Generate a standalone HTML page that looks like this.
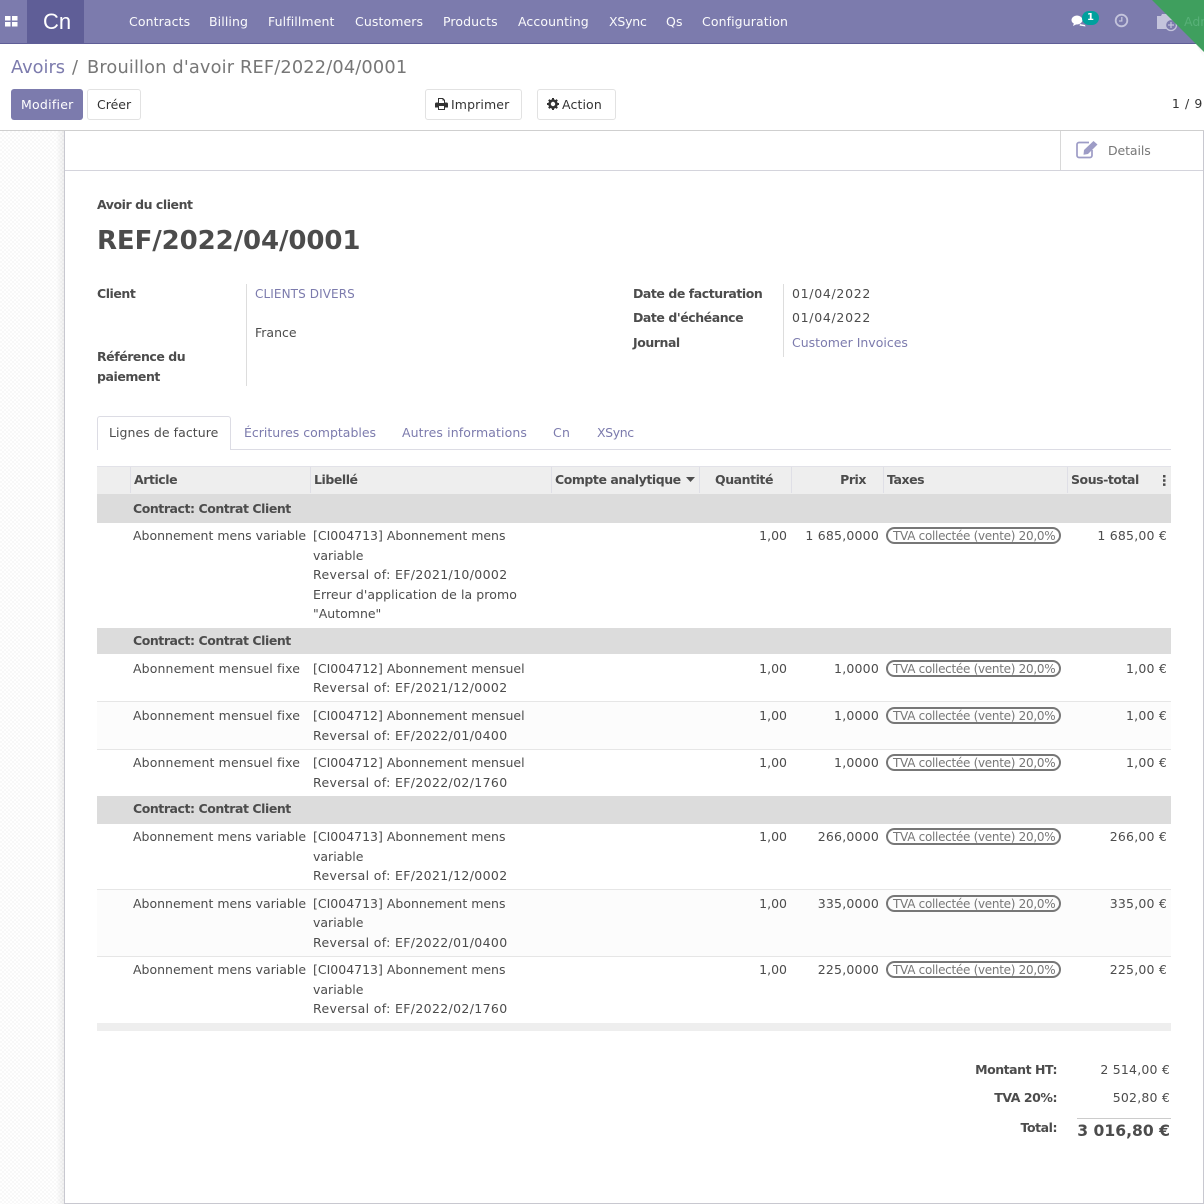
<!DOCTYPE html>
<html lang="fr"><head><meta charset="utf-8"><title>Avoir</title>
<style>
html,body{margin:0;padding:0;background:#fff}
#p{position:relative;width:1204px;height:1204px;overflow:hidden;background:#fff;font-family:"DejaVu Sans","Liberation Sans",sans-serif;font-size:12.5px;color:#4c4c4c}
#p div{position:absolute}
.t{position:absolute;white-space:nowrap;line-height:20px;height:20px;margin-top:1px}
.r{transform:translateX(-100%)}
.b{font-weight:bold;letter-spacing:-.45px}
.l{color:#7c7bad}
.n{color:#fff;top:11px;font-size:12.5px;letter-spacing:.1px;opacity:.97}
.btn{border:1px solid #e2e2e2;border-radius:3px;background:#fff;box-sizing:border-box}
.g{left:97px;width:1074px;background:#dcdcdc}
.s{left:97px;width:1074px;height:1px;background:#e6e6e6}
.alt{left:97px;width:1074px;background:#fcfcfc}
.sep{top:467px;width:1px;height:26px;background:#dfdfe6}
.pill{left:886px;width:175px;height:17px;border:2px solid #777;border-radius:9px;box-sizing:border-box}
.tx{left:893px;color:#777;font-size:12px;letter-spacing:-.29px}
.d{letter-spacing:.35px}
.m{letter-spacing:.2px}
.c{letter-spacing:.12px}
.dt{letter-spacing:.7px}
.bc{line-height:22px;height:22px;font-size:17.8px}
</style></head><body><div id="p">

<!-- nav -->
<div style="left:0;top:0;width:1204px;height:44px;background:#7c7bad;border-bottom:1px solid #5f5e97;box-sizing:border-box"></div>
<div style="left:27px;top:0;width:57px;height:43px;background:#5f5e97"></div>
<svg style="position:absolute;left:5px;top:16px" width="13" height="11" viewBox="0 0 13 11"><path fill="#fff" d="M0 0h5.500v4.500H0zM7 0h5.500v4.500H7zM0 6h5.500v4.500H0zM7 6h5.500v4.500H7z"/></svg>
<span class="t" style="left:43px;top:11px;color:#fff;font-size:22px;font-family:'Liberation Sans',sans-serif">Cn</span>
<span class="t n" style="left:129px">Contracts</span>
<span class="t n" style="left:209px">Billing</span>
<span class="t n" style="left:268px">Fulfillment</span>
<span class="t n" style="left:355px">Customers</span>
<span class="t n" style="left:443px">Products</span>
<span class="t n" style="left:518px">Accounting</span>
<span class="t n" style="left:609px;letter-spacing:-.2px">XSync</span>
<span class="t n" style="left:666px">Qs</span>
<span class="t n" style="left:702px">Configuration</span>
<svg style="position:absolute;left:1071px;top:15px" width="16" height="13" viewBox="0 0 16 13"><ellipse cx="6" cy="5" rx="5.500" ry="4.500" fill="#fff"/><path fill="#fff" d="M3 8l-1 3 4-2zM9 9l5 1 .5 1.500-6-1z"/></svg>
<div style="left:1082px;top:11px;width:17px;height:14px;border-radius:7px;background:#00a09d"></div>
<span class="t" style="left:1087px;top:7px;color:#fff;font-size:10px;font-weight:bold">1</span>
<svg style="position:absolute;left:1114px;top:13px" width="15" height="15" viewBox="0 0 15 15"><circle cx="7.500" cy="7.500" r="5.800" fill="none" stroke="#c4c4dc" stroke-width="1.800"/><path d="M7.800 4v4H5" fill="none" stroke="#c4c4dc" stroke-width="1.300"/></svg>
<svg style="position:absolute;left:1156px;top:13px" width="22" height="19" viewBox="0 0 22 19"><path fill="#c4c4dc" d="M1 3h4l1-2h5l1 2h3v13H1z"/><circle cx="15" cy="12" r="5.500" fill="#7c7bad" stroke="#c4c4dc" stroke-width="1.300"/><path d="M15 9v6M12 12h6" stroke="#c4c4dc" stroke-width="1.200"/></svg>
<svg style="position:absolute;left:1100px;top:0" width="104" height="80" viewBox="0 0 104 80"><defs><linearGradient id="sh" x1="0" y1="0" x2="1" y2="1"><stop offset="0" stop-color="#000" stop-opacity=".08"/><stop offset="1" stop-color="#000" stop-opacity="0"/></linearGradient></defs><path d="M104 52L96 44h0l8 14z" fill="url(#sh)"/><path d="M52 0H104V52Z" fill="#3f9f5e"/></svg>
<span class="t" style="left:1184px;top:11px;color:#58b078;font-size:12.500px">Adm</span>

<!-- control panel -->
<span class="t bc" style="left:11px;top:56px;color:#7c7bad">Avoirs</span>
<span class="t bc" style="left:72px;top:56px;color:#777">/</span>
<span class="t bc" style="left:87px;top:56px;color:#777;letter-spacing:.15px">Brouillon d'avoir REF/2022/04/0001</span>
<div style="left:11px;top:89px;width:72px;height:31px;background:#7c7bad;border-radius:3px"></div>
<span class="t" style="left:21px;top:94px;color:#fff;letter-spacing:.25px">Modifier</span>
<div class="btn" style="left:87px;top:89px;width:54px;height:31px"></div>
<span class="t" style="left:97px;top:94px;color:#333">Créer</span>
<div class="btn" style="left:425px;top:89px;width:97px;height:31px"></div>
<svg style="position:absolute;left:435px;top:98px" width="13" height="12" viewBox="0 0 13 12"><path fill="#333" d="M3 0h5l2 2v2.500h1.500A1.500 1.500 0 0 1 13 6v3.500h-3V12H3V9.500H0V6a1.500 1.500 0 0 1 1.500-1.500H3zM4 1v4h5V2.500H7.500V1zM4 8v3h5V8z"/></svg>
<span class="t c" style="left:451px;top:94px;color:#333">Imprimer</span>
<div class="btn" style="left:537px;top:89px;width:79px;height:31px"></div>
<svg style="position:absolute;left:547px;top:98px" width="12" height="12" viewBox="0 0 12 12"><circle cx="6" cy="6" r="3.500" fill="none" stroke="#333" stroke-width="2.600"/><path stroke="#333" stroke-width="2" d="M6 0v2M6 10v2M0 6h2M10 6h2M1.800 1.800l1.400 1.400M8.800 8.800l1.400 1.400M1.800 10.200l1.400-1.400M8.800 3.200l1.400-1.400"/></svg>
<span class="t c" style="left:562px;top:94px;color:#333">Action</span>
<span class="t r" style="left:1203px;top:93px;color:#333;letter-spacing:.6px">1 / 9</span>

<!-- gutter -->
<div style="left:0;top:131px;width:64px;height:1073px;background-color:#fff;background-image:conic-gradient(#f8f8f8 25%,#fff 0 50%,#f8f8f8 0 75%,#fff 0);background-size:4px 4px"></div>
<div style="left:56px;top:131px;width:8px;height:1073px;background:linear-gradient(90deg,rgba(0,0,0,0),rgba(0,0,0,.06))"></div>
<div style="left:0;top:130px;width:1204px;height:1px;background:#cfcfcf"></div>
<div style="left:64px;top:131px;width:1px;height:1073px;background:#c8c8d0"></div>
<div style="left:65px;top:170px;width:1139px;height:1px;background:#d4d4dc"></div>
<div style="left:1060px;top:131px;width:1px;height:39px;background:#d8d8d8"></div>
<div style="left:1203px;top:131px;width:1px;height:1073px;background:#c8c8d0"></div>
<div style="left:65px;top:1203px;width:1139px;height:1px;background:#c8c8d0"></div>
<svg style="position:absolute;left:1076px;top:140px" width="23" height="19" viewBox="0 0 23 19"><path fill="none" stroke="#9d9cc6" stroke-width="1.700" d="M16 10v5.500a2 2 0 0 1-2 2H3a2 2 0 0 1-2-2V4.500a2 2 0 0 1 2-2h10"/><path fill="#9d9cc6" d="M8 10L17.500 1l4 3.500-9.500 9.500-4.500.8z"/></svg>
<span class="t" style="left:1108px;top:140px;color:#777;letter-spacing:-.1px">Details</span>

<!-- header -->
<span class="t b" style="left:97px;top:194px">Avoir du client</span>
<span class="t" style="left:97px;top:224px;height:32px;line-height:32px;font-size:26px;font-weight:bold;letter-spacing:-.1px">REF/2022/04/0001</span>
<span class="t b" style="left:97px;top:283px">Client</span>
<span class="t b" style="left:97px;top:346px">Référence du</span>
<span class="t b" style="left:97px;top:366px">paiement</span>
<div style="left:246px;top:284px;width:1px;height:102px;background:#ddd"></div>
<span class="t l" style="left:255px;top:283px;font-size:12px;letter-spacing:.1px">CLIENTS DIVERS</span>
<span class="t" style="left:255px;top:322px">France</span>
<span class="t b" style="left:633px;top:283px">Date de facturation</span>
<span class="t b" style="left:633px;top:307px">Date d'échéance</span>
<span class="t b" style="left:633px;top:332px">Journal</span>
<div style="left:783px;top:284px;width:1px;height:73px;background:#ddd"></div>
<span class="t dt" style="left:792px;top:283px">01/04/2022</span>
<span class="t dt" style="left:792px;top:307px">01/04/2022</span>
<span class="t l" style="left:792px;top:332px">Customer Invoices</span>

<!-- tabs -->
<div style="left:97px;top:449px;width:1074px;height:1px;background:#dcdce4"></div>
<div style="left:97px;top:416px;width:134px;height:34px;background:#fff;border:1px solid #dcdce4;border-bottom:0;border-radius:3px 3px 0 0;box-sizing:border-box"></div>
<span class="t" style="left:109px;top:422px;letter-spacing:.06px">Lignes de facture</span>
<span class="t l" style="left:244px;top:422px">Écritures comptables</span>
<span class="t l" style="left:402px;top:422px;letter-spacing:.1px">Autres informations</span>
<span class="t l" style="left:553px;top:422px;letter-spacing:.3px">Cn</span>
<span class="t l" style="left:597px;top:422px;letter-spacing:-.4px">XSync</span>

<!-- table head -->
<div style="left:97px;top:466px;width:1074px;height:28px;background:#eee;border-top:1px solid #e2e2e8;box-sizing:border-box"></div>
<div class="sep" style="left:130px"></div><div class="sep" style="left:310px"></div><div class="sep" style="left:551px"></div><div class="sep" style="left:699px"></div><div class="sep" style="left:791px"></div><div class="sep" style="left:883px"></div><div class="sep" style="left:1067px"></div>
<span class="t b" style="left:134px;top:469px">Article</span>
<span class="t b" style="left:314px;top:469px">Libellé</span>
<span class="t b" style="left:555px;top:469px">Compte analytique</span>
<svg style="position:absolute;left:686px;top:477px" width="9" height="5" viewBox="0 0 9 5"><path fill="#4c4c4c" d="M0 0h9L4.500 5z"/></svg>
<span class="t b r" style="left:773px;top:469px">Quantité</span>
<span class="t b r" style="left:866px;top:469px">Prix</span>
<span class="t b" style="left:887px;top:469px">Taxes</span>
<span class="t b" style="left:1071px;top:469px">Sous-total</span>
<svg style="position:absolute;left:1162px;top:475px" width="4" height="11" viewBox="0 0 4 11"><path fill="#4c4c4c" d="M1 0h2.500v2.500H1zM1 4.200h2.500v2.500H1zM1 8.400h2.500v2.500H1z"/></svg>

<!-- rows backgrounds -->
<div class="g" style="top:494px;height:29px"></div>
<div class="g" style="top:628px;height:26px"></div>
<div class="g" style="top:796px;height:28px"></div>
<div class="alt" style="top:702px;height:47px"></div>
<div class="alt" style="top:890px;height:66px"></div>
<div class="s" style="top:701px"></div>
<div class="s" style="top:749px"></div>
<div class="s" style="top:889px"></div>
<div class="s" style="top:956px"></div>
<div class="s" style="top:1023px"></div>
<div style="left:97px;top:1023px;width:1074px;height:8px;background:#eee"></div>

<!-- groups -->
<span class="t b" style="left:133px;top:498px">Contract: Contrat Client</span>
<span class="t b" style="left:133px;top:630px">Contract: Contrat Client</span>
<span class="t b" style="left:133px;top:798px">Contract: Contrat Client</span>

<!-- row 1 -->
<span class="t" style="left:133px;top:525px">Abonnement mens variable</span>
<span class="t" style="left:313px;top:525px">[CI004713] Abonnement mens</span>
<span class="t" style="left:313px;top:545px">variable</span>
<span class="t d" style="left:313px;top:564px">Reversal of: EF/2021/10/0002</span>
<span class="t" style="left:313px;top:584px;letter-spacing:.07px">Erreur d'application de la promo</span>
<span class="t" style="left:313px;top:603px">"Automne"</span>
<span class="t r" style="left:787px;top:525px">1,00</span>
<span class="t r m" style="left:879px;top:525px">1 685,0000</span>
<div class="pill" style="top:527px"></div><span class="t tx" style="top:525px">TVA collectée (vente) 20,0%</span>
<span class="t r m" style="left:1167px;top:525px">1 685,00 €</span>

<!-- row 2 -->
<span class="t c" style="left:133px;top:658px">Abonnement mensuel fixe</span>
<span class="t" style="left:313px;top:658px">[CI004712] Abonnement mensuel</span>
<span class="t d" style="left:313px;top:677px">Reversal of: EF/2021/12/0002</span>
<span class="t r" style="left:787px;top:658px">1,00</span>
<span class="t r m" style="left:879px;top:658px">1,0000</span>
<div class="pill" style="top:660px"></div><span class="t tx" style="top:658px">TVA collectée (vente) 20,0%</span>
<span class="t r m" style="left:1167px;top:658px">1,00 €</span>

<!-- row 3 -->
<span class="t c" style="left:133px;top:705px">Abonnement mensuel fixe</span>
<span class="t" style="left:313px;top:705px">[CI004712] Abonnement mensuel</span>
<span class="t d" style="left:313px;top:725px">Reversal of: EF/2022/01/0400</span>
<span class="t r" style="left:787px;top:705px">1,00</span>
<span class="t r m" style="left:879px;top:705px">1,0000</span>
<div class="pill" style="top:707px"></div><span class="t tx" style="top:705px">TVA collectée (vente) 20,0%</span>
<span class="t r m" style="left:1167px;top:705px">1,00 €</span>

<!-- row 4 -->
<span class="t c" style="left:133px;top:752px">Abonnement mensuel fixe</span>
<span class="t" style="left:313px;top:752px">[CI004712] Abonnement mensuel</span>
<span class="t d" style="left:313px;top:772px">Reversal of: EF/2022/02/1760</span>
<span class="t r" style="left:787px;top:752px">1,00</span>
<span class="t r m" style="left:879px;top:752px">1,0000</span>
<div class="pill" style="top:754px"></div><span class="t tx" style="top:752px">TVA collectée (vente) 20,0%</span>
<span class="t r m" style="left:1167px;top:752px">1,00 €</span>

<!-- row 5 -->
<span class="t" style="left:133px;top:826px">Abonnement mens variable</span>
<span class="t" style="left:313px;top:826px">[CI004713] Abonnement mens</span>
<span class="t" style="left:313px;top:846px">variable</span>
<span class="t d" style="left:313px;top:865px">Reversal of: EF/2021/12/0002</span>
<span class="t r" style="left:787px;top:826px">1,00</span>
<span class="t r m" style="left:879px;top:826px">266,0000</span>
<div class="pill" style="top:828px"></div><span class="t tx" style="top:826px">TVA collectée (vente) 20,0%</span>
<span class="t r m" style="left:1167px;top:826px">266,00 €</span>

<!-- row 6 -->
<span class="t" style="left:133px;top:893px">Abonnement mens variable</span>
<span class="t" style="left:313px;top:893px">[CI004713] Abonnement mens</span>
<span class="t" style="left:313px;top:912px">variable</span>
<span class="t d" style="left:313px;top:932px">Reversal of: EF/2022/01/0400</span>
<span class="t r" style="left:787px;top:893px">1,00</span>
<span class="t r m" style="left:879px;top:893px">335,0000</span>
<div class="pill" style="top:895px"></div><span class="t tx" style="top:893px">TVA collectée (vente) 20,0%</span>
<span class="t r m" style="left:1167px;top:893px">335,00 €</span>

<!-- row 7 -->
<span class="t" style="left:133px;top:959px">Abonnement mens variable</span>
<span class="t" style="left:313px;top:959px">[CI004713] Abonnement mens</span>
<span class="t" style="left:313px;top:979px">variable</span>
<span class="t d" style="left:313px;top:998px">Reversal of: EF/2022/02/1760</span>
<span class="t r" style="left:787px;top:959px">1,00</span>
<span class="t r m" style="left:879px;top:959px">225,0000</span>
<div class="pill" style="top:961px"></div><span class="t tx" style="top:959px">TVA collectée (vente) 20,0%</span>
<span class="t r m" style="left:1167px;top:959px">225,00 €</span>

<!-- totals -->
<span class="t b r" style="left:1057px;top:1059px">Montant HT:</span>
<span class="t r m" style="left:1170px;top:1059px">2 514,00 €</span>
<span class="t b r" style="left:1057px;top:1087px">TVA 20%:</span>
<span class="t r m" style="left:1170px;top:1087px">502,80 €</span>
<div style="left:1077px;top:1118px;width:94px;height:1px;background:#ccc"></div>
<span class="t b r" style="left:1057px;top:1117px">Total:</span>
<span class="t r" style="left:1170px;top:1120px;font-size:15.6px;font-weight:bold">3 016,80 €</span>
</div></body></html>
